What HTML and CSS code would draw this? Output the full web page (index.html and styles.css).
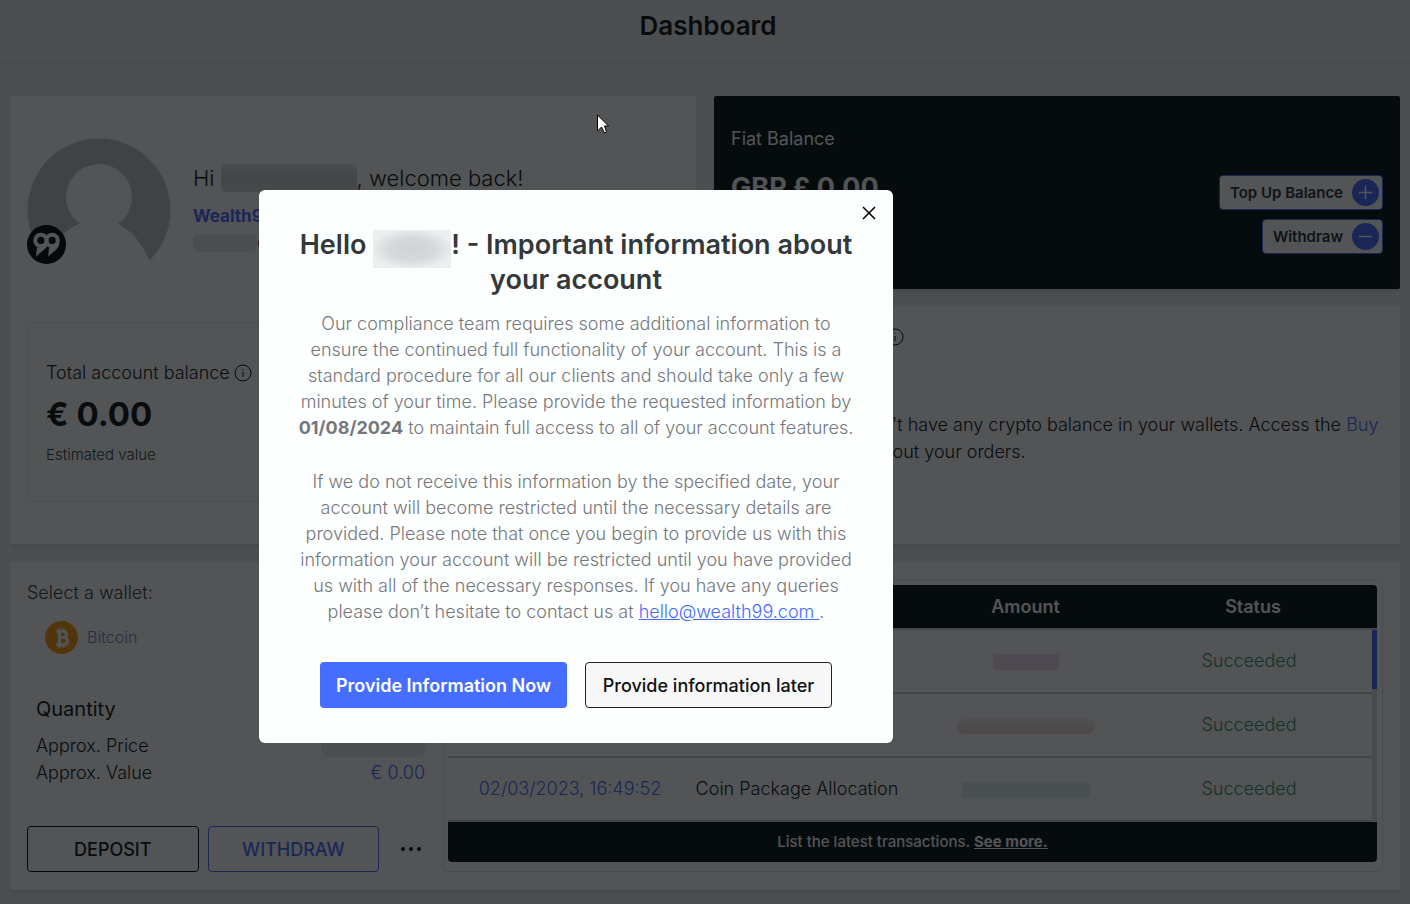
FILE: index.html
```html
<!DOCTYPE html>
<html lang="en">
<head>
    <meta charset="UTF-8">
    <meta name="viewport" content="width=device-width, initial-scale=1.0">
    <title>Dashboard</title>
    <link rel="stylesheet" href="styles.css">
</head>
<body>
    <header class="topbar">
        <h1>Dashboard</h1>
    </header>
    <main class="dashboard">
        <section class="card profile">
            <div class="profile-head">
                <div class="avatar">
                    <svg class="avatar-img" viewBox="0 0 144 144">
                        <circle cx="72" cy="72" r="71.500" fill="#c4c4c4"/>
                        <circle cx="72" cy="59" r="33" fill="#fff"/>
                        <path fill="#fff" d="M55 85C38 91 27 103 21 122L10 144h124L122 122C114 103 103 91 89 85z"/>
                    </svg>
                    <svg class="avatar-badge" viewBox="0 0 38 38">
                        <circle cx="19" cy="19" r="19" fill="#000"/>
                        <g fill="none" stroke="#fff" stroke-width="4">
                            <circle cx="13.500" cy="15" r="5.500"/>
                            <circle cx="24.500" cy="15" r="5.500"/>
                        </g>
                        <path fill="#fff" d="M17 19h3.500C19 24 13 26 8.700 31l1-9c3 0 6-1 7.300-3zM28 19l3.500-1C31 24 25 26 20.500 31l1-9c3 0 5-1 6.500-3z"/>
                    </svg>
                </div>
                <div class="profile-text">
                    <p class="greeting">Hi <span class="masked masked-name"></span>, welcome back!</p>
                    <a class="profile-id" href="#">Wealth99</a>
                    <p class="profile-mail"><span class="masked masked-mail"></span>@</p>
                </div>
            </div>
            <div class="balance">
                <p class="balance-label">Total account balance
                    <svg class="info" viewBox="0 0 18 18"><circle cx="9" cy="9" r="8"/><path d="M9 8v5M9 5v1"/></svg>
                </p>
                <p class="balance-value">€ 0.00</p>
                <p class="balance-note">Estimated value</p>
            </div>
        </section>

        <div class="side">
            <section class="card fiat">
                <div>
                    <h2>Fiat Balance</h2>
                    <p class="fiat-value">GBP £ 0.00</p>
                </div>
                <div class="fiat-buttons">
                    <button type="button">Top Up Balance
                        <svg viewBox="0 0 28 28"><circle cx="14" cy="14" r="14"/><path d="M14 7v14M7 14h14"/></svg>
                    </button>
                    <button type="button">Withdraw
                        <svg viewBox="0 0 28 28"><circle cx="14" cy="14" r="14"/><path d="M7 14h14"/></svg>
                    </button>
                </div>
            </section>
            <section class="card crypto">
                <p class="crypto-title">
                    <svg class="info" viewBox="0 0 18 18"><circle cx="9" cy="9" r="8"/><path d="M9 8v5M9 5v1"/></svg>
                </p>
                <p class="crypto-text">You don't have any crypto balance in your wallets. Access the <a href="#">Buy</a><br>to carry out your orders.</p>
            </section>
        </div>

        <section class="card wallets">
            <div class="wallet">
                <p class="wallet-label">Select a wallet:</p>
                <button class="wallet-select" type="button">
                    <svg viewBox="0 0 32 32">
                        <circle cx="16" cy="16" r="16" fill="#ff9800"/>
                        <g fill="none" stroke="#fff" stroke-width="3">
                            <path d="M11 10h6c5 0 5 6 0 6h-4 5c5 0 5 7 0 7h-7M14 10v13"/>
                            <path stroke-width="2" d="M14 7v3M18 7v3M14 23v3M18 23v3"/>
                        </g>
                    </svg>
                    Bitcoin
                </button>
                <dl class="amounts">
                    <div class="quantity"><dt>Quantity</dt><dd></dd></div>
                    <div><dt>Approx. Price</dt><dd><span class="masked masked-price"></span></dd></div>
                    <div><dt>Approx. Value</dt><dd>€ 0.00</dd></div>
                </dl>
                <div class="wallet-buttons">
                    <button class="deposit" type="button">DEPOSIT</button>
                    <button class="withdraw" type="button">WITHDRAW</button>
                    <button class="more" type="button" aria-label="More">
                        <svg viewBox="0 0 20 4"><circle cx="2" cy="2" r="2"/><circle cx="10" cy="2" r="2"/><circle cx="18" cy="2" r="2"/></svg>
                    </button>
                </div>
            </div>
            <div class="history">
                <table>
                    <thead>
                        <tr><th class="date"></th><th class="type"></th><th class="amount">Amount</th><th class="status">Status</th><th class="scroll"></th></tr>
                    </thead>
                    <tbody>
                        <tr><td class="date"></td><td class="type"></td><td class="amount"><span class="smudge pink"></span></td><td class="status">Succeeded</td><td class="scroll" rowspan="3"><div></div></td></tr>
                        <tr><td class="date"></td><td class="type"></td><td class="amount"><span class="smudge red"></span></td><td class="status">Succeeded</td></tr>
                        <tr><td class="date">02/03/2023, 16:49:52</td><td class="type">Coin Package Allocation</td><td class="amount"><span class="smudge green"></span></td><td class="status">Succeeded</td></tr>
                    </tbody>
                </table>
                <p class="history-foot">List the latest transactions. <a href="#">See more.</a></p>
            </div>
        </section>
    </main>

    <div class="backdrop">
        <div class="modal" role="dialog" aria-labelledby="modal-title">
            <button class="close" type="button" aria-label="Close">
                <svg viewBox="0 0 14 14"><path d="M1 1l12 12M13 1L1 13"/></svg>
            </button>
            <h2 id="modal-title">Hello <span class="modal-name"></span>! - Important information about your account</h2>
            <p>Our compliance team requires some additional information to ensure the continued full functionality of your account. This is a standard procedure for all our clients and should take only a few minutes of your time. Please provide the requested information by <b>01/08/2024</b> to maintain full access to all of your account features.</p>
            <p>If we do not receive this information by the specified date, your account will become restricted until the necessary details are provided. Please note that once you begin to provide us with this information your account will be restricted until you have provided us with all of the necessary responses. If you have any queries please don’t hesitate to contact us at <a href="mailto:hello@wealth99.com">hello@wealth99.com&nbsp;</a>.</p>
            <div class="modal-buttons">
                <button class="now" type="button">Provide Information Now</button>
                <button class="later" type="button">Provide information later</button>
            </div>
        </div>
    </div>

    <svg class="cursor" viewBox="0 0 12 20">
        <path fill="#fff" stroke="#000" d="M.5 1v16l4-4 3 6 2-1-2-6h4z"/>
    </svg>
</body>
</html>
```
FILE: styles.css
```css
*{
    margin: 0;
    padding: 0;
    box-sizing: border-box;
}

body{
    font-family: Inter, "Liberation Sans", sans-serif;
    font-size: 18px;
    font-weight: 300;
    color: #0a0e11;
    background: #ececec;
    overflow: hidden;
}

button{
    font-family: inherit;
    cursor: pointer;
}

a{
    color: #4569ff;
}

.topbar{
    height: 65px;
    padding-top: 8px;
    border-bottom: 5px solid #dfdfdf;
    text-align: center;
}

.topbar h1{
    padding-left: 6px;
    font-size: 26px;
    line-height: 36px;
    font-weight: 600;
}

.dashboard{
    display: grid;
    grid-template-columns: 1fr 1fr;
    gap: 18px;
    padding: 31px 10px 14px;
}

.card{
    background: #fff;
    border-radius: 2px;
    box-shadow: 0 3px 3px #d8d8d8;
}

.profile{
    padding: 42px 17px;
}

.profile-head{
    display: flex;
    gap: 22px;
}

.avatar{
    position: relative;
    width: 144px;
    height: 144px;
}

.avatar-img{
    display: block;
}

.avatar-badge{
    position: absolute;
    left: 0;
    bottom: 18px;
    width: 39px;
}

.profile-text{
    padding-top: 24px;
}

.greeting{
    font-size: 22px;
    line-height: 32px;
    white-space: nowrap;
}

.profile-id{
    display: block;
    margin-top: 10px;
    font-size: 17px;
    line-height: 24px;
    font-weight: 700;
    text-decoration: none;
}

.profile-mail{
    line-height: 28px;
}

.masked{
    display: inline-block;
    vertical-align: middle;
    border-radius: 6px;
}

.masked-name{
    width: 136px;
    height: 28px;
    margin-top: -4px;
    background: linear-gradient(#e4e4e4, #cfcfcf 50%, #d8d8d8);
}

.masked-mail{
    width: 64px;
    height: 18px;
    background: #e6eae9;
}

.masked-price{
    width: 104px;
    height: 20px;
    background: #ececee;
}

.balance{
    margin-top: 40px;
    height: 180px;
    padding: 37px 18px;
    border: 1px solid #eee;
    border-radius: 4px;
}

.balance-label{
    display: flex;
    align-items: center;
    gap: 4px;
    line-height: 26px;
}

.info{
    width: 18px;
    height: 18px;
    fill: none;
    stroke: #000;
    stroke-width: 1;
}

.balance-value{
    margin-top: 6px;
    font-size: 33px;
    line-height: 44px;
    font-weight: 700;
}

.balance-note{
    margin-top: 7px;
    font-size: 15px;
    line-height: 24px;
    color: #333;
}

.side{
    display: flex;
    flex-direction: column;
    gap: 17px;
}

.fiat{
    display: flex;
    justify-content: space-between;
    height: 193px;
    padding: 30px 17px;
    background: #030a0c;
    color: #fff;
}

.fiat h2{
    font-size: 18px;
    line-height: 26px;
    font-weight: 400;
}

.fiat-value{
    margin-top: 20px;
    font-size: 27px;
    line-height: 32px;
    font-weight: 700;
}

.fiat-buttons{
    display: flex;
    flex-direction: column;
    align-items: flex-end;
    gap: 9px;
    padding-top: 49px;
}

.fiat-buttons button{
    display: flex;
    align-items: center;
    gap: 9px;
    height: 35px;
    padding: 0 3px 0 10px;
    border: 1px solid #4569ff;
    border-radius: 4px;
    background: #fff;
    color: #22282c;
    font-size: 15px;
    font-weight: 600;
}

.fiat-buttons svg{
    width: 27px;
    height: 27px;
    fill: #4569ff;
    stroke: #fff;
    stroke-width: 1.5;
}

.fiat-buttons circle{
    stroke: none;
}

.crypto{
    flex: 1;
    padding: 18px 17px;
}

.crypto-title{
    display: flex;
    align-items: center;
    height: 26px;
    padding-left: 155px;
}

.crypto-text{
    margin-top: 61px;
    padding-left: 92px;
    line-height: 27px;
    white-space: nowrap;
}

.crypto-text a{
    text-decoration: none;
}

.wallets{
    grid-column: 1 / 3;
    display: flex;
    gap: 9px;
    padding: 18px 17px;
}

.wallet{
    width: 407px;
}

.wallet-label{
    line-height: 26px;
    color: #333;
}

.wallet-select{
    display: flex;
    align-items: center;
    gap: 9px;
    width: 100%;
    height: 46px;
    margin-top: 8px;
    padding: 0 18px;
    border: 0;
    background: none;
    color: #7380c8;
    font-size: 16px;
    font-weight: 300;
}

.wallet-select svg{
    width: 33px;
}

.amounts{
    margin-top: 34px;
    padding: 0 9px;
    line-height: 27px;
}

.amounts div{
    display: flex;
    justify-content: space-between;
}

.amounts .quantity{
    margin-bottom: 8px;
    font-size: 20px;
    font-weight: 400;
    line-height: 30px;
}

.amounts dd{
    color: #4569ff;
}

.wallet-buttons{
    display: flex;
    gap: 9px;
    margin-top: 40px;
}

.wallet-buttons button{
    width: 172px;
    height: 46px;
    border: 1px solid #000;
    border-radius: 4px;
    background: none;
    font-size: 18px;
    font-weight: 500;
    color: #0a0e11;
}

.wallet-buttons .withdraw{
    border-color: #4569ff;
    color: #4569ff;
}

.wallet-buttons .more{
    width: 46px;
    border: 0;
}

.more svg{
    display: block;
    width: 20px;
    margin: 0 auto;
}

.history{
    flex: 1;
    min-width: 0;
    padding: 4px 5px 8px 4px;
    border: 1px solid #e4e4e4;
    border-radius: 4px;
}

.history table{
    width: 100%;
    table-layout: fixed;
    border-collapse: separate;
    border-spacing: 0;
}

.history th{
    height: 45px;
    border-bottom: 2px solid #ccc;
    background: #030a0c;
    background-clip: padding-box;
    color: #fff;
    font-weight: 600;
}

.history th:first-child{
    border-top-left-radius: 4px;
}

.history th:last-child{
    border-top-right-radius: 4px;
}

.history td{
    height: 64px;
    padding-bottom: 1px;
    border-bottom: 2px solid #ccc;
    text-align: center;
    white-space: nowrap;
}

.history .date{
    width: 229px;
}

.history td.date{
    padding-left: 15px;
    color: #4569ff;
}

.history .type{
    width: 240px;
}

.history .status{
    width: 238px;
}

.history td.status{
    padding-right: 8px;
    color: #2f8f62;
}

.history .scroll{
    width: 5px;
}

.history td.scroll{
    vertical-align: top;
    border: 0;
    background: #ddd;
}

.scroll div{
    height: 59px;
    background: #4569ff;
}

.smudge{
    display: inline-block;
    vertical-align: middle;
    height: 16px;
    border-radius: 2px;
}

.pink{
    width: 66px;
    background: #f4def2;
}

.red{
    width: 138px;
    border-radius: 8px;
    background: linear-gradient(#f8f4f4, #f0cfcf);
}

.green{
    width: 128px;
    background: #e0f3ec;
}

.history-foot{
    height: 40px;
    border-radius: 0 0 4px 4px;
    background: #030a0c;
    color: #fff;
    font-size: 15px;
    line-height: 40px;
    font-weight: 500;
    text-align: center;
}

.history-foot a{
    color: #fff;
    font-weight: 700;
}

.backdrop{
    position: fixed;
    top: 0;
    right: 0;
    bottom: 0;
    left: 0;
    background: rgba(8, 11, 14, .7);
}

.modal{
    position: relative;
    width: 634px;
    margin: 190px 0 0 259px;
    padding: 37px 38px 35px;
    border-radius: 6px;
    background: #fdfefe;
    text-align: center;
}

.close{
    position: absolute;
    top: 12px;
    right: 12px;
    width: 24px;
    height: 24px;
    border: 0;
    background: none;
}

.close svg{
    width: 14px;
    fill: none;
    stroke: #000;
    stroke-width: 1.5;
}

.modal h2{
    margin-bottom: 14px;
    color: #33383b;
    font-size: 27px;
    line-height: 35px;
    font-weight: 600;
}

.modal-name{
    display: inline-block;
    width: 78px;
    height: 38px;
    margin: -4px 0 -8px;
    vertical-align: middle;
    background: radial-gradient(#cfd3d5, #d5d9da 40%, #eceeef 75%);
}

.modal p{
    margin-bottom: 28px;
    color: #74787d;
    line-height: 26px;
}

.modal b{
    font-weight: 700;
}

.modal-buttons{
    display: flex;
    justify-content: center;
    gap: 18px;
    margin-top: 37px;
}

.modal-buttons button{
    width: 247px;
    height: 46px;
    border-radius: 4px;
    font-size: 18px;
}

.modal-buttons .now{
    border: 0;
    background: #456eff;
    color: #fff;
    font-weight: 600;
}

.modal-buttons .later{
    border: 1px solid #222;
    background: #f7f7f8;
    color: #111;
    font-weight: 500;
}

.cursor{
    position: absolute;
    top: 114px;
    left: 597px;
    width: 12px;
    height: 20px;
}
```
